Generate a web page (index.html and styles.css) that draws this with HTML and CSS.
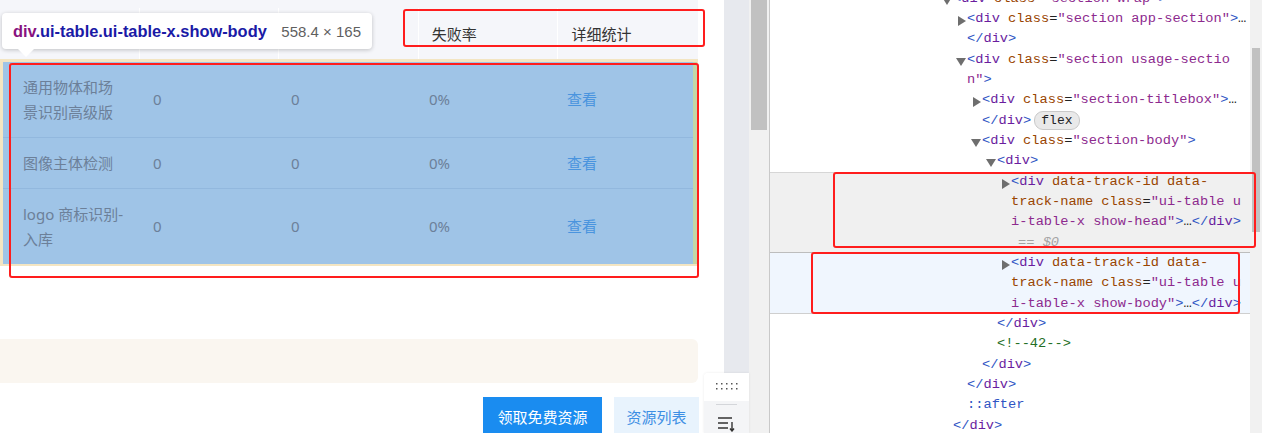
FILE: index.html
```html
<!DOCTYPE html>
<html lang="zh-CN">
<head>
  <meta charset="UTF-8" />
  <title>ui-table inspect</title>
  <link rel="stylesheet" href="styles.css">
</head>
<body>
  <div class="screen">
    <main class="page">
      <div class="tbl-head">
        <div class="th"></div>
        <div class="th"></div>
        <div class="th"></div>
        <div class="th">失败率</div>
        <div class="th">详细统计</div>
      </div>

      <div class="tbl-body">
        <div class="rows">
          <div class="tr">
            <div class="td name">通用物体和场景识别高级版</div>
            <div class="td">0</div>
            <div class="td">0</div>
            <div class="td">0%</div>
            <div class="td link">查看</div>
          </div>
          <div class="tr">
            <div class="td name">图像主体检测</div>
            <div class="td">0</div>
            <div class="td">0</div>
            <div class="td">0%</div>
            <div class="td link">查看</div>
          </div>
          <div class="tr">
            <div class="td name">logo 商标识别-入库</div>
            <div class="td">0</div>
            <div class="td">0</div>
            <div class="td">0%</div>
            <div class="td link">查看</div>
          </div>
        </div>
      </div>

      <div class="notice"></div>

      <div class="actions">
        <button class="btn btn-primary">领取免费资源</button>
        <button class="btn btn-light">资源列表</button>
      </div>

      <div class="tip">
        <span class="tip-sel"><span class="tip-tag">div</span>.ui-table.ui-table-x.show-body</span>
        <span class="tip-size">558.4 × 165</span>
      </div>
    </main>

    <div class="gutter"></div>
    <div class="track"><div class="thumb"></div></div>

    <section class="devtools">
      <div class="code">
        <div class="ln lv0"><i class="arr-d"></i><span class="p">&lt;</span><span class="t">div</span> <span class="a">class</span>=<span class="v">"section-wrap"</span><span class="p">&gt;</span></div>
        <div class="ln lv1"><i class="arr-r"></i><span class="p">&lt;</span><span class="t">div</span> <span class="a">class</span>=<span class="v">"section app-section"</span><span class="p">&gt;</span>…</div>
        <div class="ln lv1"><span class="p">&lt;/</span><span class="t">div</span><span class="p">&gt;</span></div>
        <div class="ln lv1"><i class="arr-d"></i><span class="p">&lt;</span><span class="t">div</span> <span class="a">class</span>=<span class="v">"section usage-sectio</span></div>
        <div class="ln lv1"><span class="v">n"</span><span class="p">&gt;</span></div>
        <div class="ln lv2"><i class="arr-r"></i><span class="p">&lt;</span><span class="t">div</span> <span class="a">class</span>=<span class="v">"section-titlebox"</span><span class="p">&gt;</span>…</div>
        <div class="ln lv2"><span class="p">&lt;/</span><span class="t">div</span><span class="p">&gt;</span><span class="badge">flex</span></div>
        <div class="ln lv2"><i class="arr-d"></i><span class="p">&lt;</span><span class="t">div</span> <span class="a">class</span>=<span class="v">"section-body"</span><span class="p">&gt;</span></div>
        <div class="ln lv3"><i class="arr-d"></i><span class="p">&lt;</span><span class="t">div</span><span class="p">&gt;</span></div>
        <div class="sel">
          <div class="ln lv4"><i class="arr-r"></i><span class="p">&lt;</span><span class="t">div</span> <span class="a">data-track-id data-</span></div>
          <div class="ln lv4"><span class="a">track-name class</span>=<span class="v">"ui-table u</span></div>
          <div class="ln lv4"><span class="v">i-table-x show-head"</span><span class="p">&gt;</span>…<span class="p">&lt;/</span><span class="t">div</span><span class="p">&gt;</span></div>
          <div class="ln lv4 ref">== $0</div>
        </div>
        <div class="hov">
          <div class="ln lv4"><i class="arr-r"></i><span class="p">&lt;</span><span class="t">div</span> <span class="a">data-track-id data-</span></div>
          <div class="ln lv4"><span class="a">track-name class</span>=<span class="v">"ui-table u</span></div>
          <div class="ln lv4"><span class="v">i-table-x show-body"</span><span class="p">&gt;</span>…<span class="p">&lt;/</span><span class="t">div</span><span class="p">&gt;</span></div>
        </div>
        <div class="ln lv3"><span class="p">&lt;/</span><span class="t">div</span><span class="p">&gt;</span></div>
        <div class="ln lv3 c">&lt;!--42--&gt;</div>
        <div class="ln lv2"><span class="p">&lt;/</span><span class="t">div</span><span class="p">&gt;</span></div>
        <div class="ln lv1"><span class="p">&lt;/</span><span class="t">div</span><span class="p">&gt;</span></div>
        <div class="ln lv1"><span class="p">::after</span></div>
        <div class="ln lv0"><span class="p">&lt;/</span><span class="t">div</span><span class="p">&gt;</span></div>
      </div>
    </section>

    <div class="track slim"><div class="thumb"></div></div>

    <div class="dock">
      <div class="dock-top">
        <svg width="22" height="8" viewBox="0 0 22 8">
          <g fill="#555">
            <rect x="0" y="0" width="1.5" height="1.5"/><rect x="5" y="0" width="1.5" height="1.5"/><rect x="10" y="0" width="1.5" height="1.5"/><rect x="15" y="0" width="1.5" height="1.5"/><rect x="20" y="0" width="1.5" height="1.5"/>
            <rect x="0" y="5" width="1.5" height="1.5"/><rect x="5" y="5" width="1.5" height="1.5"/><rect x="10" y="5" width="1.5" height="1.5"/><rect x="15" y="5" width="1.5" height="1.5"/><rect x="20" y="5" width="1.5" height="1.5"/>
          </g>
        </svg>
      </div>
      <div class="dock-bottom">
        <span class="dock-line"></span>
        <svg width="17" height="15" viewBox="0 0 17 15">
          <g stroke="#333" stroke-width="1.4" fill="none">
            <path d="M0 1h14M0 6h10M0 11h10"/>
            <path d="M14 5v9M12 11.5l2 2.5 2-2.5"/>
          </g>
        </svg>
      </div>
    </div>

    <div class="mark m1"></div>
    <div class="mark m2"></div>
    <div class="mark m3"></div>
    <div class="mark m4"></div>
  </div>
</body>
</html>
```

FILE: styles.css
```css
body {
  margin: 0;
  background: #fff;
  overflow: hidden;
}

.screen {
  position: relative;
  display: flex;
  height: 433px;
  overflow: hidden;
  font-family: "Noto Sans", "Noto Sans CJK SC", sans-serif;
}

/* left: the inspected page */
.page {
  position: relative;
  width: 724px;
  flex: none;
}

.tbl-head {
  display: flex;
  width: 698px;
  height: 59px;
  padding-top: 8px;
  box-sizing: border-box;
  background: #f5f6fa;
}

.th {
  width: 139.7px;
  box-sizing: border-box;
  border-right: 1px solid #fff;
  padding-left: 13px;
  display: flex;
  align-items: center;
  font-size: 15px;
  color: #333;
}

.th:last-child {
  border-right: none;
}

.tbl-body {
  width: 698px;
  box-sizing: border-box;
  border-style: solid;
  border-color: #f3e5c2;
  border-width: 3px 1px 2px 3px;
  padding-right: 4px;
  background: #c4d7a6;
}

.rows {
  background: #9fc4e7;
}

.tr {
  display: flex;
  align-items: center;
}

.tr + .tr {
  border-top: 1px solid #92b8de;
}

.td {
  width: 138px;
  box-sizing: border-box;
  padding: 12.5px 12px;
  font-size: 15px;
  line-height: 25px;
  color: #6c8099;
}

.td.name {
  padding-left: 20px;
  padding-right: 18px;
}

.td.link {
  color: #4a94de;
}

.notice {
  width: 698px;
  height: 44px;
  margin-top: 73px;
  background: #faf6f0;
  border-radius: 0 6px 6px 0;
}

.actions {
  display: flex;
  justify-content: flex-end;
  gap: 12px;
  width: 699px;
  margin-top: 14px;
}

.btn {
  height: 38px;
  border: none;
  font-family: inherit;
  font-size: 15px;
  padding: 0;
}

.btn-primary {
  width: 119px;
  background: #1a8cf0;
  color: #fff;
}

.btn-light {
  width: 85px;
  background: #e8f3fd;
  color: #3d8fe4;
}

/* devtools hover tooltip */
.tip {
  position: absolute;
  left: 2px;
  top: 13px;
  width: 370px;
  height: 36px;
  box-sizing: border-box;
  padding: 0 11px;
  display: flex;
  align-items: center;
  justify-content: space-between;
  background: #fff;
  border-radius: 4px;
  box-shadow: 0 1px 4px rgba(0, 0, 0, 0.22);
  font-family: "Liberation Sans", Arial, sans-serif;
}

.tip::after {
  content: "";
  position: absolute;
  left: 16px;
  bottom: -8px;
  border-top: 8px solid #fff;
  border-left: 8px solid transparent;
  border-right: 8px solid transparent;
}

.tip-sel {
  font-weight: bold;
  font-size: 16.4px;
  color: #1a1aa6;
}

.tip-tag {
  color: #881280;
}

.tip-size {
  font-size: 15px;
  color: #5f5f5f;
}

/* scrollbars */
.gutter {
  width: 25px;
  flex: none;
  background: #e7e9ee;
}

.track {
  width: 21px;
  flex: none;
  padding: 0 2px;
  box-sizing: border-box;
  background: #f1f1f1;
  border-right: 1px solid #c9c9c9;
}

.thumb {
  height: 130px;
  background: #c1c1c1;
}

.track.slim {
  width: 12px;
  border-right: none;
  padding-top: 48px;
}

.track.slim .thumb {
  height: 184px;
}

/* right: elements panel */
.devtools {
  flex: 1;
  overflow: hidden;
  font-family: "Liberation Mono", monospace;
  font-size: 13.7px;
  color: #222;
}

.code {
  margin-top: -11.5px;
}

.ln {
  height: 20.35px;
  line-height: 20.35px;
  white-space: pre;
}

.lv0 { padding-left: 183px; }
.lv1 { padding-left: 197px; }
.lv2 { padding-left: 212px; }
.lv3 { padding-left: 227px; }
.lv4 { padding-left: 241px; }

.p { color: #2f55c4; }
.t { color: #6a1d9e; }
.a { color: #994500; }
.v { color: #8d2a8e; }
.c { color: #236e25; }

.ref {
  padding-left: 248px;
  color: #a3a3a3;
  font-style: italic;
}

.arr-r,
.arr-d {
  display: inline-block;
  width: 0;
  height: 0;
  vertical-align: -4px;
}

.arr-r {
  margin-left: -9px;
  margin-right: 1px;
  border-left: 8px solid #6e6e6e;
  border-top: 5px solid transparent;
  border-bottom: 5px solid transparent;
}

.arr-d {
  margin-left: -11px;
  margin-right: 1px;
  border-top: 8px solid #6e6e6e;
  border-left: 5px solid transparent;
  border-right: 5px solid transparent;
  vertical-align: -3px;
}

.badge {
  display: inline-block;
  margin-left: 3px;
  padding: 0 6px;
  height: 17px;
  line-height: 17px;
  border: 1px solid #c9c9c9;
  border-radius: 9px;
  background: #e9e9e9;
  color: #202124;
  font-size: 13px;
  vertical-align: 0;
}

.sel {
  background: #f0f0f0;
  box-shadow: inset 0 1px #d6d6d6, inset 0 -1px #bdbdbd;
}

.hov {
  background: #f0f6fe;
  box-shadow: inset 0 -1px #cfcfcf;
}

/* floating dock over the page gutter */
.dock {
  position: absolute;
  left: 704px;
  top: 373px;
  width: 45px;
  height: 60px;
  border-radius: 4px 0 0 0;
  box-shadow: 0 0 3px rgba(0, 0, 0, 0.08);
  overflow: hidden;
}

.dock-top {
  height: 28px;
  background: #fff;
  display: flex;
  align-items: center;
  justify-content: center;
}

.dock-bottom {
  height: 32px;
  background: #f4f5f7;
  display: flex;
  flex-direction: column;
  align-items: center;
}

.dock-line {
  width: 21px;
  height: 1px;
  margin: 3px 0 12px;
  background: #d4d6da;
}

/* annotation boxes */
.mark {
  position: absolute;
  border: 2.5px solid #ff1d1d;
  border-radius: 3px;
}

.m1 { left: 403px; top: 9px; width: 298px; height: 34px; }
.m2 { left: 9px; top: 63px; width: 686px; height: 211px; }
.m3 { left: 833px; top: 172px; width: 419px; height: 72px; }
.m4 { left: 811px; top: 252px; width: 425px; height: 58px; }
```
